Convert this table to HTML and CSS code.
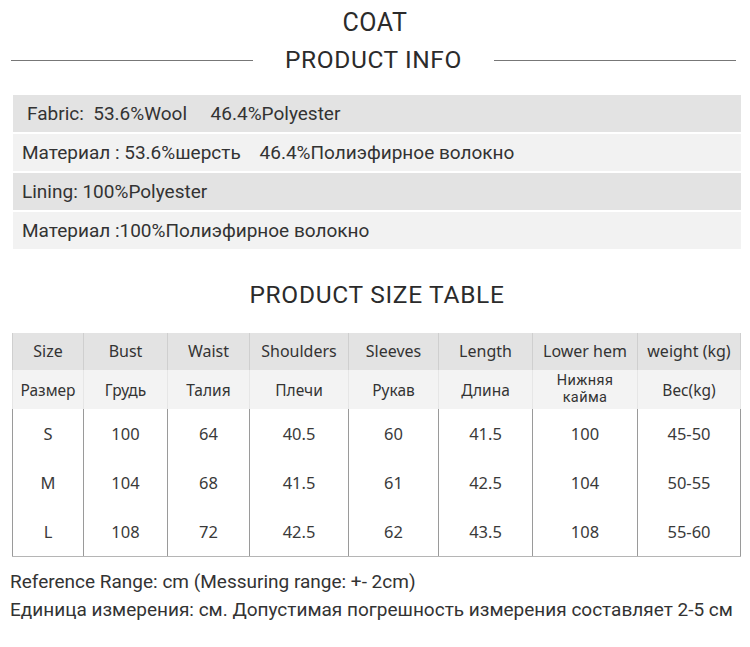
FILE: index.html
```html
<!DOCTYPE html>
<html lang="ru">
<head>
<meta charset="utf-8">
<title>Coat product info</title>
<link rel="stylesheet" href="styles.css">
</head>
<body>
<div class="page">
  <h1 class="title">COAT</h1>
  <div class="divider-title">
    <span class="rule"></span>
    <h2 class="subtitle">PRODUCT INFO</h2>
    <span class="rule"></span>
  </div>
  <div class="info">
    <div class="info-row dark first"><span class="txt">Fabric:&nbsp;&nbsp;53.6%Wool&nbsp;&nbsp;&nbsp;&nbsp;&nbsp;46.4%Polyester</span></div>
    <div class="info-row light"><span class="txt">Материал : 53.6%шерсть&nbsp;&nbsp;&nbsp;&nbsp;46.4%Полиэфирное волокно</span></div>
    <div class="info-row dark"><span class="txt">Lining: 100%Polyester</span></div>
    <div class="info-row light"><span class="txt">Материал :100%Полиэфирное волокно</span></div>
  </div>
  <h2 class="table-title">PRODUCT SIZE TABLE</h2>
  <table class="sizes">
    <colgroup>
      <col class="c1"><col class="c2"><col class="c3"><col class="c4"><col class="c5"><col class="c6"><col class="c7"><col class="c8">
    </colgroup>
    <tr class="head-en">
      <td>Size</td><td>Bust</td><td>Waist</td><td>Shoulders</td><td>Sleeves</td><td>Length</td><td>Lower hem</td><td>weight (kg)</td>
    </tr>
    <tr class="head-ru">
      <td>Размер</td><td>Грудь</td><td>Талия</td><td>Плечи</td><td>Рукав</td><td>Длина</td><td class="two"><span class="ln">Нижняя</span><span class="ln">кайма</span></td><td>Вес(kg)</td>
    </tr>
    <tr class="data">
      <td>S</td><td>100</td><td>64</td><td>40.5</td><td>60</td><td>41.5</td><td>100</td><td>45-50</td>
    </tr>
    <tr class="data">
      <td>M</td><td>104</td><td>68</td><td>41.5</td><td>61</td><td>42.5</td><td>104</td><td>50-55</td>
    </tr>
    <tr class="data last">
      <td>L</td><td>108</td><td>72</td><td>42.5</td><td>62</td><td>43.5</td><td>108</td><td>55-60</td>
    </tr>
  </table>
  <div class="notes">
    <p>Reference Range: cm (Messuring range: +- 2cm)</p>
    <p>Единица измерения: см. Допустимая погрешность измерения составляет 2-5 см</p>
  </div>
</div>
</body>
</html>
```
FILE: styles.css
```css
* { box-sizing: border-box; }
html, body { margin: 0; padding: 0; background: #fff; }
body {
  width: 750px;
  height: 647px;
  overflow: hidden;
  font-family: Roboto, "Liberation Sans", sans-serif;
  color: #333;
}
.page {
  padding: 8px 0 0 0;
}
.title {
  margin: 0;
  text-align: center;
  font-family: Roboto, sans-serif;
  font-weight: 400;
  font-size: 25px;
  line-height: 30px;
  letter-spacing: 0.5px;
  color: #2b2b2b;
}
.divider-title {
  display: flex;
  align-items: center;
  margin: 6px 14px 0 11px;
  gap: 32px;
}
.rule {
  flex: 1;
  height: 1px;
  background: #777;
}
.subtitle {
  margin: 0;
  font-weight: 400;
  font-size: 24.5px;
  line-height: 32px;
  letter-spacing: 0.6px;
  color: #2b2b2b;
}
.info {
  margin: 19px 9px 0 13px;
  display: flex;
  flex-direction: column;
  gap: 2px;
}
.info-row {
  height: 37px;
  display: flex;
  align-items: center;
  padding-left: 9px;
  font-family: Roboto, sans-serif;
  font-size: 19px;
  color: #333;
}
.info-row.first { padding-left: 14px; }
.info-row.dark { background: #e3e3e3; }
.info-row.light { background: #f2f2f2; }
.table-title {
  margin: 31px 0 0 4px;
  text-align: center;
  font-weight: 400;
  font-size: 24.5px;
  line-height: 30px;
  letter-spacing: 0.7px;
  color: #2b2b2b;
}
.sizes {
  margin: 23px 0 0 12px;
  width: 728px;
  border-collapse: collapse;
  table-layout: fixed;
  font-family: "Noto Sans", sans-serif;
  font-size: 16px;
  color: #333;
}
.c1 { width: 71px; }
.c2 { width: 84px; }
.c3 { width: 82px; }
.c4 { width: 99px; }
.c5 { width: 90px; }
.c6 { width: 94px; }
.c7 { width: 105px; }
.c8 { width: 103px; }
.sizes td {
  text-align: center;
  vertical-align: middle;
  padding: 0;
  border-left: 1px solid #c8c8c8;
  border-right: 1px solid #c8c8c8;
  white-space: nowrap;
}
.head-en td {
  height: 37px;
  background: #e3e3e3;
  border-color: #cfcfcf;
  padding-bottom: 2px;
}
.head-ru td {
  height: 39px;
  background: #f3f3f3;
  border-color: #e6e6e6;
  font-size: 15.5px;
}
.head-ru td.two {
  font-family: Roboto, sans-serif;
  font-size: 14.5px;
  padding-bottom: 2px;
  letter-spacing: 0.4px;
}
.head-ru .ln {
  display: block;
  line-height: 17px;
  height: 17px;
}
.data td {
  height: 49px;
  font-size: 16.5px;
  color: #3a3a3a;
  border-color: #9a9a9a;
}
.data.last td { border-bottom: 1px solid #b5b5b5; }
.notes {
  margin: 11px 0 0 10px;
  font-family: Roboto, sans-serif;
  font-size: 19px;
  color: #333;
}
.notes p {
  margin: 0;
  line-height: 28px;
}
```
